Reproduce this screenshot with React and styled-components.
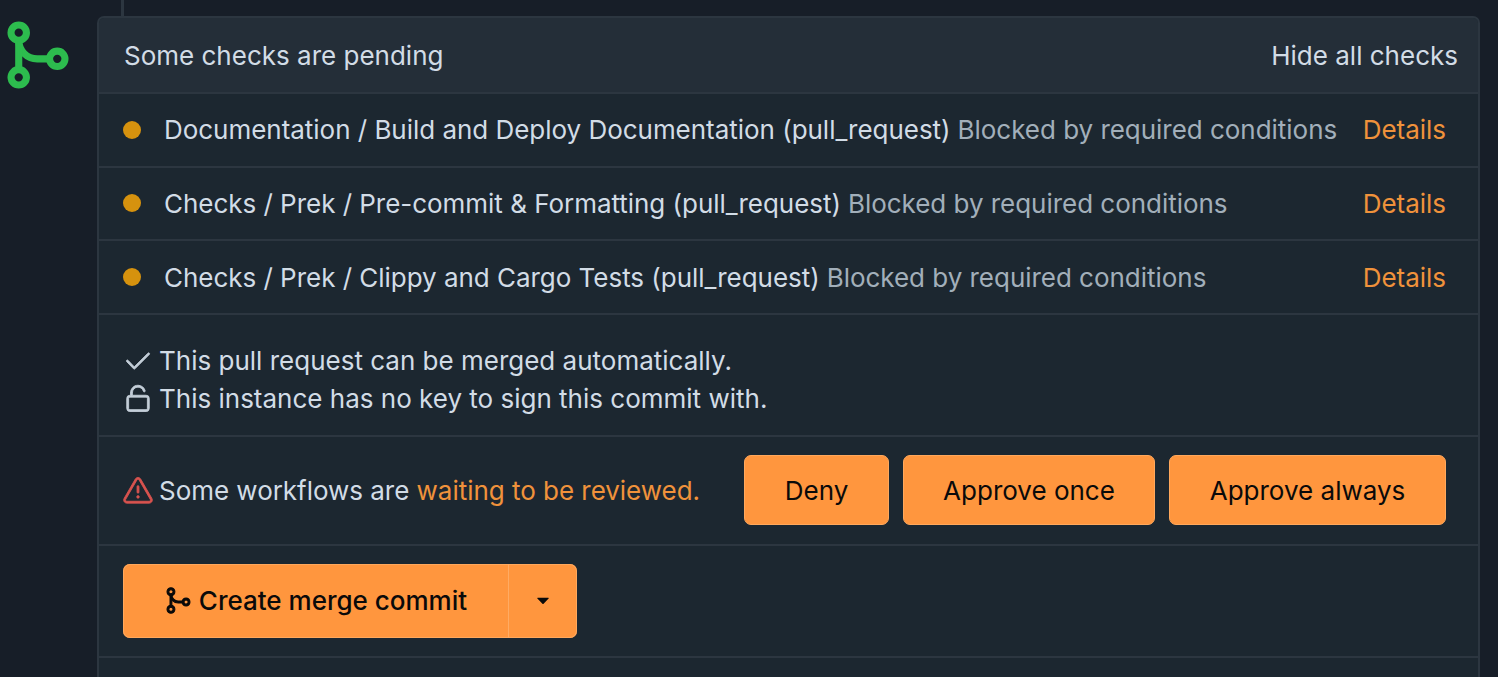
import styled, { createGlobalStyle } from 'styled-components';
import { GoAlert, GoCheck, GoGitMerge, GoTriangleDown, GoUnlock } from 'react-icons/go';

const GlobalStyle = createGlobalStyle`
  html, body {
    margin: 0;
    padding: 0;
    height: 100%;
    overflow: hidden;
    background: #171e28;
  }
  body {
    font-family: Inter, "Liberation Sans", sans-serif;
    font-size: 26px;
    color: #d2dce6;
  }
`;

const Page = styled.div`
  display: flex;
  width: 1498px;
  height: 677px;
  overflow: hidden;
  background: #171e28;
`;

const Gutter = styled.div`
  width: 97px;
  flex: none;
  padding-top: 18px;
  box-sizing: border-box;
  color: #2dbc4e;
`;

const MergeMark = styled(GoGitMerge)`
  display: block;
  width: 74px;
  height: 74px;
  margin-left: 1px;
  stroke: currentColor;
  stroke-width: 0.8;
`;

const Main = styled.div`
  width: 1383px;
  flex: none;
`;

const TimelineLine = styled.div`
  width: 3px;
  height: 16px;
  margin-left: 24px;
  background: #2c3640;
`;

const Panel = styled.div`
  background: #1c2730;
  border: 2px solid #2c3640;
  border-bottom: 0;
  border-radius: 7px 7px 0 0;
  box-sizing: border-box;
`;

const Header = styled.div`
  display: flex;
  justify-content: space-between;
  align-items: center;
  height: 74px;
  padding: 0 20px 0 25px;
  background: #242e38;
  border-radius: 5px 5px 0 0;
`;

const CheckRow = styled.div`
  display: flex;
  align-items: center;
  height: 73.67px;
  padding: 0 32px 0 24px;
  border-top: 2px solid #2c3640;
  box-sizing: border-box;
  letter-spacing: -0.03px;
`;

const Dot = styled.span`
  width: 18px;
  height: 18px;
  flex: none;
  border-radius: 50%;
  background: #d6920e;
  margin-right: 23px;
`;

const CheckName = styled.span`
  white-space: nowrap;
`;

const CheckState = styled.span`
  margin-left: 7px;
  color: #a2afba;
  white-space: nowrap;
`;

const DetailsLink = styled.a`
  margin-left: auto;
  color: #f0923b;
`;

const Section = styled.div`
  border-top: 2px solid #2c3640;
  box-sizing: border-box;
`;

const MergeInfo = styled(Section)`
  height: 122px;
  padding: 31px 24px 0;
  display: flex;
  flex-direction: column;
  gap: 8px;
`;

const InfoLine = styled.div`
  display: flex;
  align-items: center;
  height: 30px;
  white-space: nowrap;
`;

const IconSlot = styled.span`
  width: 36px;
  flex: none;
  display: flex;
  align-items: center;
  color: ${(props) => props.$color || '#c3ced8'};

  svg {
    width: 30px;
    height: 30px;
    stroke: currentColor;
    stroke-width: 0.7;
  }
`;

const ApprovalRow = styled(Section)`
  height: 109px;
  padding: 0 32px 0 24px;
  display: flex;
  align-items: center;
  letter-spacing: -0.03px;
`;

const Accent = styled.span`
  color: #f0923b;
`;

const ApprovalButtons = styled.div`
  display: flex;
  gap: 14px;
  margin-left: auto;
`;

const OrangeButton = styled.button`
  height: 70px;
  width: ${(props) => props.$width}px;
  padding: 0;
  border: 1px solid #ffa85c;
  border-radius: 7px;
  background: #ff963e;
  color: #0a0a0a;
  font: inherit;
`;

const ActionRow = styled(Section)`
  height: 112px;
  padding: 18px 24px 0;
`;

const SplitButton = styled.div`
  display: flex;
  width: 454px;
  height: 74px;
  border-radius: 7px;
  background: #ff963e;
  color: #0a0a0a;
  overflow: hidden;
  box-shadow: inset 0 0 0 1px #ffa85c;
`;

const MergeAction = styled.div`
  flex: 1;
  display: flex;
  align-items: center;
  justify-content: center;
  gap: 6px;
  font-weight: 500;
  border-right: 1px solid #ffab63;

  svg {
    width: 29px;
    height: 29px;
    stroke: currentColor;
    stroke-width: 0.9;
  }
`;

const Caret = styled.div`
  width: 68px;
  flex: none;
  display: flex;
  align-items: center;
  justify-content: center;

  svg {
    width: 22px;
    height: 22px;
  }
`;

const Rest = styled(Section)`
  height: 40px;
`;

const checks = [
  'Documentation / Build and Deploy Documentation (pull_request)',
  'Checks / Prek / Pre-commit & Formatting (pull_request)',
  'Checks / Prek / Clippy and Cargo Tests (pull_request)',
];

function App() {
  return (
    <Page>
      <GlobalStyle />
      <Gutter>
        <MergeMark />
      </Gutter>
      <Main>
        <TimelineLine />
        <Panel>
          <Header>
            <span>Some checks are pending</span>
            <span>Hide all checks</span>
          </Header>
          {checks.map((name) => (
            <CheckRow key={name}>
              <Dot />
              <CheckName>{name}</CheckName>
              <CheckState>Blocked by required conditions</CheckState>
              <DetailsLink>Details</DetailsLink>
            </CheckRow>
          ))}
          <MergeInfo>
            <InfoLine>
              <IconSlot>
                <GoCheck />
              </IconSlot>
              This pull request can be merged automatically.
            </InfoLine>
            <InfoLine>
              <IconSlot>
                <GoUnlock />
              </IconSlot>
              This instance has no key to sign this commit with.
            </InfoLine>
          </MergeInfo>
          <ApprovalRow>
            <IconSlot $color="#d9534f">
              <GoAlert />
            </IconSlot>
            Some workflows are&nbsp;<Accent>waiting to be reviewed.</Accent>
            <ApprovalButtons>
              <OrangeButton $width={145}>Deny</OrangeButton>
              <OrangeButton $width={252}>Approve once</OrangeButton>
              <OrangeButton $width={277}>Approve always</OrangeButton>
            </ApprovalButtons>
          </ApprovalRow>
          <ActionRow>
            <SplitButton>
              <MergeAction>
                <GoGitMerge />
                Create merge commit
              </MergeAction>
              <Caret>
                <GoTriangleDown />
              </Caret>
            </SplitButton>
          </ActionRow>
          <Rest />
        </Panel>
      </Main>
    </Page>
  );
}

export default App;
